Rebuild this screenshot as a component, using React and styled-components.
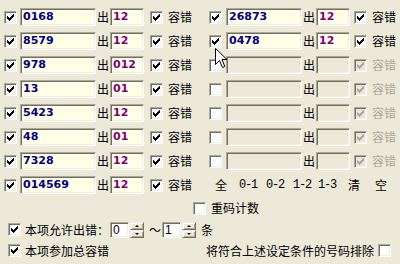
import React from 'react';
import styled, { createGlobalStyle } from 'styled-components';

const Global = createGlobalStyle`
  html, body { margin: 0; padding: 0; background: #ECE9D8; }
  body { font-family: "Noto Sans CJK SC", "Liberation Sans", sans-serif; font-size: 12px; color: #000; }
`;

const Window = styled.div`
  position: relative;
  width: 400px;
  height: 264px;
  overflow: hidden;
  box-sizing: border-box;
  padding-top: 5px;
  background: #ECE9D8;
`;

const Columns = styled.div`
  display: grid;
  grid-template-columns: 205px 191px;
  padding-left: 4px;
`;

const Column = styled.div`
  display: flex;
  flex-direction: column;
`;

const Row = styled.div`
  display: flex;
  align-items: center;
  height: 24px;
`;

const BoxFrame = styled.span`
  box-sizing: border-box;
  flex: none;
  display: block;
  width: 13px;
  height: 13px;
  padding: 1px;
  border: 1px solid;
  border-color: #ACA899 #FFFFFF #FFFFFF #ACA899;
  box-shadow: inset 1px 1px 0 #716F64, inset -1px -1px 0 #F1EFE2;
  background: ${p => (p.$disabled ? '#ECE9D8' : '#FFFFFF')};
  margin-left: ${p => p.$ml || 0}px;
  margin-right: ${p => p.$mr || 0}px;
  svg { display: block; }
`;

const CHECK =
  'M7 1h1v1h-1z M6 2h2v1h-2z M1 3h1v1h-1z M5 3h3v1h-3z M1 4h2v1h-2z M4 4h3v1h-3z M1 5h5v1h-5z M2 6h3v1h-3z M3 7h1v1h-1z';

const CheckBox = ({ checked, disabled, ml, mr }) => (
  <BoxFrame $disabled={disabled} $ml={ml} $mr={mr}>
    {checked && (
      <svg width="9" height="9" viewBox="0 0 9 9" shapeRendering="crispEdges">
        <path d={CHECK} fill={disabled ? '#ACA899' : '#000'} />
      </svg>
    )}
  </BoxFrame>
);

const Field = styled.div`
  box-sizing: border-box;
  flex: none;
  width: ${p => p.$w}px;
  height: 18px;
  border: 1px solid;
  border-color: #ACA899 #FFFFFF #FFFFFF #ACA899;
  box-shadow: inset 1px 1px 0 #716F64, inset -1px -1px 0 #F1EFE2;
  background: ${p => (p.$disabled ? '#ECE9D8' : '#FFFFE8')};
  color: ${p => p.$color};
  font: bold 11px "DejaVu Sans", Verdana, sans-serif;
  line-height: 16px;
  padding-left: 2px;
  white-space: nowrap;
  overflow: hidden;
`;

const Out = styled.span`
  flex: none;
  width: 14px;
  padding-left: 1px;
  box-sizing: border-box;
  line-height: 14px;
`;

const Caption = styled.span`
  flex: none;
  line-height: 14px;
  white-space: nowrap;
  color: ${p => (p.$disabled ? '#ACA899' : '#000')};
  margin-left: 5px;
`;

const EntryRow = ({ num, out, active, boxGap, chkGap }) => (
  <Row>
    <CheckBox checked={active} mr={boxGap} />
    <Field $w={76} $color="#000080" $disabled={!active}>{num}</Field>
    <Out>出</Out>
    <Field $w={34} $color="#800080" $disabled={!active}>{out}</Field>
    <CheckBox checked disabled={!active} ml={chkGap} />
    <Caption $disabled={!active}>容错</Caption>
  </Row>
);

const ShortcutRow = styled.div`
  display: grid;
  grid-template-columns: 24px 27px 27px 25px 30px 27px auto;
  align-items: center;
  height: 24px;
  padding-left: 6px;
  line-height: 14px;
`;

const Digits = styled.span`
  font-family: "Liberation Mono", "DejaVu Sans Mono", monospace;
  font-size: 12px;
  letter-spacing: -1.2px;
`;

const OptionRow = styled.div`
  display: flex;
  align-items: center;
  height: ${p => p.$h}px;
  padding-left: ${p => p.$indent}px;
  padding-right: 9px;
  justify-content: ${p => (p.$split ? 'space-between' : 'flex-start')};
`;

const Group = styled.div`
  display: flex;
  align-items: center;
  gap: ${p => p.$gap}px;
`;

const SpinWrap = styled.div`
  display: flex;
  height: 16px;
  flex: none;
`;

const SpinField = styled.div`
  box-sizing: border-box;
  width: 19px;
  height: 16px;
  border: 1px solid;
  border-color: #ACA899 #FFFFFF #FFFFFF #ACA899;
  box-shadow: inset 1px 1px 0 #716F64, inset -1px -1px 0 #F1EFE2;
  background: #FFFFFF;
  font: 12px "Liberation Sans", Arial, sans-serif;
  line-height: 14px;
  padding-left: 2px;
`;

const SpinButtons = styled.div`
  display: flex;
  flex-direction: column;
  width: 14px;
  margin-left: 1px;
`;

const SpinBtn = styled.div`
  box-sizing: border-box;
  flex: 1;
  border: 1px solid;
  border-color: #F1EFE2 #716F64 #716F64 #F1EFE2;
  box-shadow: inset 1px 1px 0 #FFFFFF, inset -1px -1px 0 #ACA899;
  background: #ECE9D8;
  display: flex;
  align-items: center;
  justify-content: center;
  &::after {
    content: '';
    width: 0;
    height: 0;
    border-left: 2px solid transparent;
    border-right: 2px solid transparent;
    ${p => (p.$down ? 'border-top: 2px solid #000;' : 'border-bottom: 2px solid #000;')}
  }
`;

const Spin = ({ value }) => (
  <SpinWrap>
    <SpinField>{value}</SpinField>
    <SpinButtons>
      <SpinBtn />
      <SpinBtn $down />
    </SpinButtons>
  </SpinWrap>
);

const Text = styled.span`
  line-height: 14px;
  white-space: nowrap;
  margin: 0 ${p => p.$mr || 0}px 0 ${p => p.$ml || 0}px;
`;

const Pointer = styled.svg`
  position: absolute;
  left: 215px;
  top: 48px;
  pointer-events: none;
`;

const leftRows = [
  ['0168', '12'], ['8579', '12'], ['978', '012'], ['13', '01'],
  ['5423', '12'], ['48', '01'], ['7328', '12'], ['014569', '12'],
];
const rightRows = [
  ['26873', '12', true], ['0478', '12', true],
  ['', '', false], ['', '', false], ['', '', false], ['', '', false], ['', '', false],
];

export default function App() {
  return (
    <Window>
      <Global />
      <Columns>
        <Column>
          {leftRows.map(([n, o], i) => (
            <EntryRow key={i} num={n} out={o} active boxGap={3} chkGap={6} />
          ))}
        </Column>
        <Column>
          {rightRows.map(([n, o, a], i) => (
            <EntryRow key={i} num={n} out={o} active={a} boxGap={4} chkGap={4} />
          ))}
          <ShortcutRow>
            <span>全</span>
            <Digits>0-1</Digits>
            <Digits>0-2</Digits>
            <Digits>1-2</Digits>
            <Digits>1-3</Digits>
            <span>清</span>
            <span>空</span>
          </ShortcutRow>
        </Column>
      </Columns>
      <OptionRow $h={22} $indent={193}>
        <Group $gap={5}>
          <CheckBox />
          <Text>重码计数</Text>
        </Group>
      </OptionRow>
      <OptionRow $h={21} $indent={8}>
        <CheckBox checked mr={4} />
        <Text $mr={1}>本项允许出错：</Text>
        <Spin value="0" />
        <Text $ml={5} $mr={1}>～</Text>
        <Spin value="1" />
        <Text $ml={5}>条</Text>
      </OptionRow>
      <OptionRow $h={21} $indent={8} $split>
        <Group $gap={4}>
          <CheckBox checked />
          <Text>本项参加总容错</Text>
        </Group>
        <Group $gap={4}>
          <Text>将符合上述设定条件的号码排除</Text>
          <CheckBox />
        </Group>
      </OptionRow>
      <Pointer width="13" height="21" viewBox="0 0 13 21">
        <path
          d="M0.5 0.5 L0.5 16.5 L4.5 12.5 L7.5 19.5 L9.8 18.5 L7 11.5 L12 11.5 Z"
          fill="#FFFFFF"
          stroke="#000"
          strokeWidth="1"
          strokeLinejoin="miter"
        />
      </Pointer>
    </Window>
  );
}
